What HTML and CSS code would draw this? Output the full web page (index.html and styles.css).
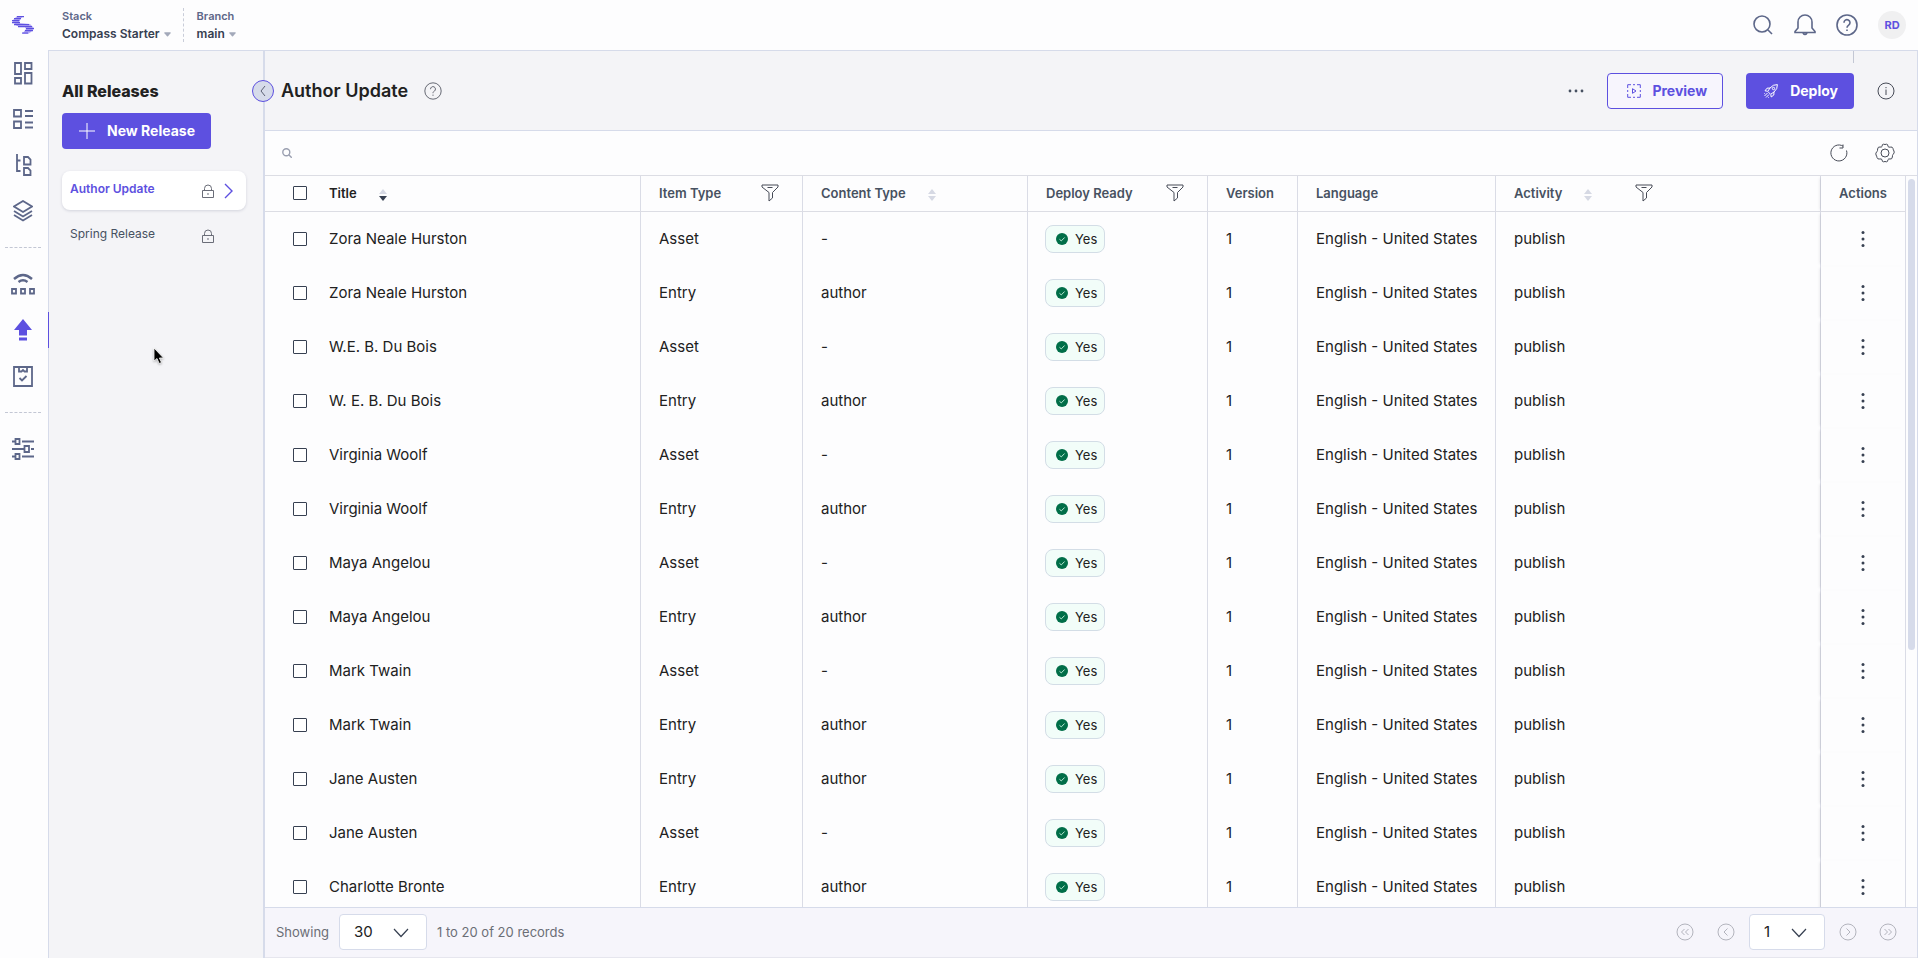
FILE: index.html
```html
<!DOCTYPE html>
<html lang="en">
<head>
<meta charset="utf-8">
<title>Releases</title>
<link rel="stylesheet" href="styles.css">
<script src="releases.js" defer></script>
</head>
<body>

<svg class="sprite" width="0" height="0">
	<symbol id="i-filter" viewBox="0 0 18 18"><path d="M1 1h16v2l-5.500 5.500v5.500l-3.500 3v-8.500L1 3zM6.500 3.500h5"/></symbol>
	<symbol id="i-sort" viewBox="0 0 8 12"><path class="up" d="M0 5l4-5 4 5z"/><path class="down" d="M0 7h8l-4 5z"/></symbol>
	<symbol id="i-lock" viewBox="0 0 12 14"><path d="M.5 6.500h11v7H.5zM2.500 6.500V4.500a3.500 3.500 0 0 1 7 0v2"/><circle cx="6" cy="10" r=".4"/></symbol>
	<symbol id="i-chevron" viewBox="0 0 16 10"><path d="M1 1l7 7.500L15 1"/></symbol>
	<symbol id="i-caret" viewBox="0 0 8 5"><path d="M1 0h6q1.200.300.500 1.200L4.600 4.600q-.6.500-1.200 0L.5 1.200Q-.200.300 1 0z"/></symbol>
	<symbol id="i-check" viewBox="0 0 12 12"><circle cx="6" cy="6" r="6" fill="#006e48"/><path d="M3.500 6.300l1.800 1.600 3.300-3.400" fill="none" stroke="#b9ead5"/></symbol>
	<symbol id="i-dots" viewBox="0 0 4 18"><circle cx="2" cy="2.500" r="1.500"/><circle cx="2" cy="9" r="1.500"/><circle cx="2" cy="15.500" r="1.500"/></symbol>
	<symbol id="i-help" viewBox="0 0 22 22"><circle cx="11" cy="11" r="10"/><path d="M8 8.800a3 3 0 1 1 4.700 2.300c-1.200.800-1.700 1.200-1.700 2.600M11 15.400v1.500"/></symbol>
</svg>

<div class="app">
	<nav class="rail">
		<a href="#" class="logo" aria-label="Home">
			<svg width="22" height="18" viewBox="0 0 22 18"><path fill="#b3a9f5" d="M5 0h6L7 5l1 2 10 1 4 4-3 4-3 2h-6l4-5-1-2-8-1-5-5z"/><path stroke="#5d50e0" stroke-width="1.200" d="M5 .6h7M2 2.600h7M0 4.600h7.500M0 6.600h8M2 8.600h15M6 10.600h14M14 12.600h8M13 14.600h8M10 17h6"/></svg>
		</a>
		<a href="#" class="rail-link" aria-label="Dashboard"><svg width="20" height="24" viewBox="0 0 20 24"><path d="M2 2h6v11H2zM12 2h6.500v6H12zM2 17h6v5.500H2zM12 12h6.500v10.500H12z"/></svg></a>
		<a href="#" class="rail-link" aria-label="Content models"><svg width="20" height="20" viewBox="0 0 20 20"><path d="M1 1h7v6.500H1zM1 12.500h7V19H1zM12 2h8M12 7h8M12 13.500h8M12 18.500h8"/></svg></a>
		<a href="#" class="rail-link" aria-label="Entries"><svg width="18" height="24" viewBox="0 0 18 24"><path d="M3 1v17h3.500M3 7.500h3.500M10 4h4l2.500 2.500V11.500H10zM10 15h4l2.500 2.500V22H10z"/></svg></a>
		<a href="#" class="rail-link" aria-label="Assets"><svg width="20" height="22" viewBox="0 0 20 22"><path d="M10 1l9 5.500-9 5.500-9-5.500zM1 11l9 5.500 9-5.500M1 15l9 5.500 9-5.500"/></svg></a>
		<hr class="rail-line">
		<a href="#" class="rail-link" aria-label="Publish queue"><svg width="24" height="22" viewBox="0 0 24 22"><path d="M3 6q9-8 18 0M7.500 9q4.500-3.500 9 0" stroke-width="2.400"/><path d="M1 16h4v4.500H1zM10 16h4v4.500h-4zM19 16h4v4.500h-4z"/></svg></a>
		<a href="#" class="rail-link active" aria-label="Releases"><svg width="18" height="22" viewBox="0 0 18 22"><path d="M9 0l9 11h-5v5.500H5V11H0zM5 18.500h8v3H5z"/></svg></a>
		<a href="#" class="rail-link" aria-label="Tasks"><svg width="20" height="22" viewBox="0 0 20 22"><path d="M1 2h18v19H1zM6 2v4.500h2.500l1.500-1.500 1.500 1.500H14V2M6.500 13l2.500 2.500 4.500-4.500"/></svg></a>
		<hr class="rail-line">
		<a href="#" class="rail-link" aria-label="Settings"><svg width="22" height="22" viewBox="0 0 22 22"><path d="M0 3.500h3M3.500 1h4v5h-4zM10 3.500h12M0 11h12M12.500 8h4.500v6h-4.500zM19 11h3M0 18.500h3M3.500 16h4v5h-4zM10 18.500h12"/></svg></a>
	</nav>

	<div class="page">
		<header class="topbar">
			<button type="button" class="switcher"><span class="switcher-label">Stack</span><span class="switcher-value">Compass Starter <svg width="7" height="5"><use href="#i-caret"/></svg></span></button>
			<span class="switcher-line"></span>
			<button type="button" class="switcher"><span class="switcher-label">Branch</span><span class="switcher-value">main <svg width="7" height="5"><use href="#i-caret"/></svg></span></button>
			<div class="topbar-tools">
				<button type="button" class="icon-btn" aria-label="Search"><svg width="22" height="22" viewBox="0 0 22 22"><circle cx="10" cy="10" r="8"/><path d="M16 16l4 4"/></svg></button>
				<button type="button" class="icon-btn" aria-label="Notifications"><svg width="22" height="22" viewBox="0 0 22 22"><path d="M4 14V8a7 7 0 0 1 14 0v6l3 3.500v1H1v-1zM9 19q2 3 4 0"/></svg></button>
				<button type="button" class="icon-btn" aria-label="Help"><svg width="22" height="22"><use href="#i-help"/></svg></button>
				<button type="button" class="avatar">RD</button>
			</div>
		</header>

		<div class="workspace">
			<aside class="releases">
				<h2 class="releases-title">All Releases</h2>
				<button type="button" class="btn btn-primary btn-new"><svg width="16" height="16" viewBox="0 0 16 16"><path d="M8 0v16M0 8h16"/></svg>New Release</button>
				<ul class="release-list">
					<li><a href="#" class="release current"><span>Author Update</span><svg class="lock" width="12" height="14"><use href="#i-lock"/></svg><svg class="go" width="9" height="16" viewBox="0 0 9 16"><path d="M1 1l7 7-7 7"/></svg></a></li>
					<li><a href="#" class="release"><span>Spring Release</span><svg class="lock" width="12" height="14"><use href="#i-lock"/></svg></a></li>
				</ul>
				<button type="button" class="collapse" aria-label="Collapse"><svg width="6" height="10" viewBox="0 0 6 10"><path d="M5 0L1 5l4 5"/></svg></button>
			</aside>

			<main class="main">
				<div class="main-head">
					<h1>Author Update</h1>
					<button type="button" class="thin-icon" aria-label="About releases"><svg width="18" height="18"><use href="#i-help"/></svg></button>
					<div class="main-actions">
						<button type="button" class="more" aria-label="More"><svg width="16" height="4" viewBox="0 0 16 4"><circle cx="2" cy="2" r="1.400"/><circle cx="8" cy="2" r="1.400"/><circle cx="14" cy="2" r="1.400"/></svg></button>
						<button type="button" class="btn btn-outline"><svg width="14" height="14" viewBox="0 0 14 14"><path d="M.7 4V.7H4M6 .7h2M10 .7h3.300V4M13.300 6v2M13.300 10v3.300H10M8 13.300H6M4 13.300H.7V10M.7 8V6M5.500 4.700L9 7 5.500 9.300z"/></svg>Preview</button>
						<button type="button" class="btn btn-primary"><svg width="14" height="14" viewBox="0 0 14 14"><path d="M13.400.600Q9 .300 6 4L3 4.200 1 6.800l2.500.400 3.300 3.300.400 2.500 2.600-2 .200-3Q13.700 5 13.400.600zM4 7l2-3M7 10l3-2M3.500 9l-3 3M5 10.500l-3 3M1 9l-.6.600M5 13l-.6.600"/><circle cx="9.500" cy="4.500" r="1.200"/></svg>Deploy</button>
						<button type="button" class="thin-icon" aria-label="Info"><svg width="18" height="18" viewBox="0 0 18 18"><circle cx="9" cy="9" r="8"/><path d="M9 7.500V13M9 5v1.200"/></svg></button>
					</div>
					<span class="tick"></span>
				</div>

				<div class="search-row">
					<label class="search"><svg width="10" height="10" viewBox="0 0 10 10"><circle cx="4.300" cy="4.300" r="3.500"/><path d="M6.800 6.800l3 3"/></svg><input type="text" aria-label="Search releases"></label>
					<button type="button" class="thin-icon" aria-label="Refresh"><svg width="18" height="18" viewBox="0 0 18 18"><path d="M16.500 6.500A8 8 0 1 1 13 2.100M13 .5v3.500h-3.500"/></svg></button>
					<button type="button" class="thin-icon" aria-label="Table settings"><svg width="20" height="20" viewBox="0 0 20 20"><circle cx="10" cy="10" r="4"/><path d="M7 3.500Q7 1 8.500 1.200q1.500.600 3 0Q13 1 13 3.500q.800 1 2.200.6Q17.500 3.500 18 5.500q.200 1.500 1 2.500.800 2-1 3.500-.8 1-.6 2.500Q17 16.500 15 16q-1.500-.4-2 .6-.2 2.400-1.500 2.200-1.500-.6-3 0Q7 19 7 16.600q-.8-1-2.200-.6Q2.500 16.500 2 14.500q-.2-1.500-1-2.500-.8-2 1-3.500.800-1 .6-2.500Q3 3.500 5 4q1.500.400 2-.5z"/></svg></button>
				</div>

				<div class="table-wrap">
					<table class="items">
						<colgroup>
							<col class="c-title"><col class="c-item"><col class="c-content"><col class="c-deploy"><col class="c-version"><col class="c-lang"><col><col class="c-actions">
						</colgroup>
						<thead>
							<tr>
								<th><div class="th-in"><input type="checkbox" aria-label="Select all"><span class="dark">Title</span><svg class="sort desc" width="8" height="12"><use href="#i-sort"/></svg></div></th>
								<th><div class="th-in spread">Item Type<svg class="filter" width="18" height="18"><use href="#i-filter"/></svg></div></th>
								<th><div class="th-in">Content Type<svg class="sort" width="8" height="12"><use href="#i-sort"/></svg></div></th>
								<th><div class="th-in spread">Deploy Ready<svg class="filter" width="18" height="18"><use href="#i-filter"/></svg></div></th>
								<th><div class="th-in">Version</div></th>
								<th><div class="th-in">Language</div></th>
								<th><div class="th-in">Activity<svg class="sort" width="8" height="12"><use href="#i-sort"/></svg><svg class="filter apart" width="18" height="18"><use href="#i-filter"/></svg></div></th>
								<th class="actions">Actions</th>
							</tr>
						</thead>
						<tbody id="rows"></tbody>
					</table>
					<div class="scroll"><div class="scroll-thumb"></div></div>
				</div>

				<footer class="pager">
					<label for="size">Showing</label>
					<span class="select"><select id="size"><option>30</option><option>50</option></select><svg width="16" height="10"><use href="#i-chevron"/></svg></span>
					<span>1 to 20 of 20 records</span>
					<div class="pager-nav">
						<button type="button" aria-label="First page"><svg width="18" height="18" viewBox="0 0 18 18"><circle cx="9" cy="9" r="8"/><path d="M8.500 6L5.500 9l3 3M12.500 6l-3 3 3 3"/></svg></button>
						<button type="button" aria-label="Previous page"><svg width="18" height="18" viewBox="0 0 18 18"><circle cx="9" cy="9" r="8"/><path d="M10.500 5.500L7 9l3.500 3.500"/></svg></button>
						<span class="select small"><select aria-label="Page"><option>1</option></select><svg width="16" height="10"><use href="#i-chevron"/></svg></span>
						<button type="button" aria-label="Next page"><svg width="18" height="18" viewBox="0 0 18 18"><circle cx="9" cy="9" r="8"/><path d="M7.500 5.500L11 9l-3.500 3.500"/></svg></button>
						<button type="button" aria-label="Last page"><svg width="18" height="18" viewBox="0 0 18 18"><circle cx="9" cy="9" r="8"/><path d="M5.500 6l3 3-3 3M9.500 6l3 3-3 3"/></svg></button>
					</div>
				</footer>
			</main>
		</div>
	</div>
</div>

<svg class="pointer" width="12" height="18" viewBox="0 0 12 18"><path d="M1 1v13l3-2.500 2.200 5 2.300-1L6.400 11H10.500z" fill="#000" stroke="#fff" stroke-width=".8"/></svg>

</body>
</html>
```

FILE: styles.css
```css
/* reset */
*{ box-sizing:border-box;}
html,body{ height:100%; margin:0; overflow:hidden;}
body{ font:14px/20px Inter, "Liberation Sans", sans-serif; color:#212121; background:#fdfdfe;}
h1,h2,ul{ margin:0; padding:0;}
li{ list-style:none;}
a{ color:inherit; text-decoration:none;}
button,input,select{ font:inherit; color:inherit; margin:0;}
button{ padding:0; border:0; background:none; cursor:pointer;}
svg{ display:block; flex:none; fill:none;}
.sprite{ position:absolute;}

/* frame */
.app{ display:flex; height:100%;}
.page{ flex:1; min-width:0; display:flex; flex-direction:column;}
.workspace{ flex:1; min-height:0; display:flex; border-top:1px solid #d6dbea;}

/* rail */
.rail{ width:48px; padding-right:2px; flex:none; display:flex; flex-direction:column;}
.logo{ height:50px; display:flex; align-items:center; justify-content:center;}
.rail-link{ position:relative; height:46px; display:flex; align-items:center; justify-content:center; stroke:#5d6789; stroke-width:1.8px;}
.rail-link.active svg{ fill:#5d50e0; stroke:none;}
.rail-link.active:after{ content:""; position:absolute; right:-3px; top:5px; width:1px; height:36px; background:#5d50e0; z-index:1;}
.rail-line{ width:36px; height:0; margin:13px auto; border:0; border-top:1px dashed #c3c7d4;}

/* topbar */
.topbar{ height:50px; flex:none; display:flex; align-items:center; padding:0 12px 0 14px;}
.switcher{ display:flex; flex-direction:column; align-items:flex-start; font-weight:600; text-align:left;}
.switcher-label{ font-size:11px; line-height:18px; color:#5d6789;}
.switcher-value{ font-size:12px; line-height:18px; color:#374051; display:flex; align-items:center; gap:4px;}
.switcher-value svg{ fill:#a3a9ba;}
.switcher-line{ height:34px; margin:0 13px 0 12px; border-left:1px dashed #c9cdd9;}
.topbar-tools{ margin-left:auto; display:flex; align-items:center; gap:20px;}
.icon-btn{ stroke:#5d6789; stroke-width:1.6px;}
.avatar{ width:28px; height:28px; border-radius:50%; background:#f0f0f1; color:#5d50e0; font-size:11px; font-weight:700;}

/* release pane */
.releases{ position:relative; width:217px; flex:none; padding:30px 17px 0 13px; background:#f4f4f7; border-left:1px solid #d6dbea; border-right:2px solid #d6dbea;}
.releases-title{ font-size:16px; line-height:20px; font-weight:800;}
.btn{ height:36px; display:flex; align-items:center; border-radius:4px; font-size:14px; font-weight:700;}
.btn-primary{ background:#5d50e0; color:#fff; stroke:#fff; padding:0 16px 0 18px; gap:12px;}
.btn-new{ margin-top:12px; padding:0 16px 0 17px; gap:12px;}
.release-list{ margin-top:22px;}
.release{ height:39px; display:flex; align-items:center; padding-left:8px; margin-bottom:6px; border-radius:8px; font-size:12px; color:#475161;}
.release span{ width:132px; padding-bottom:3px;}
.release.current{ background:#fff; color:#5d50e0; font-weight:600; box-shadow:0 1px 3px rgba(40,45,90,.16);}
.lock{ stroke:#6a6d78;}
.go{ margin-left:10px; stroke:#5d50e0; stroke-width:1.4px;}
.collapse{ position:absolute; right:-11px; top:29px; width:22px; height:22px; display:flex; align-items:center; justify-content:center; border:1px solid #5d50e0; border-radius:50%; background:#d6dbea; stroke:#5b6073; z-index:2;}

/* main head */
.main{ flex:1; min-width:0; display:flex; flex-direction:column; border-right:1px solid #d6dbea;}
.main-head{ position:relative; flex:none; height:80px; display:flex; align-items:center; padding:0 22px 0 16px; background:#f4f4f7; border-bottom:1px solid #d6dbea;}
.main-head h1{ font-size:18px; line-height:24px; font-weight:600; margin-right:16px;}
.thin-icon{ stroke:#474b57; stroke-width:1px;}
.main-actions{ margin-left:auto; display:flex; align-items:center; gap:23px;}
.more svg{ fill:#475161;}
.btn-outline{ border:1px solid #5d50e0; color:#5d50e0; background:#f7f5fd; stroke:#5d50e0; padding:0 15px 0 19px; gap:11px;}
.tick{ position:absolute; top:0; right:63px; width:1px; height:12px; background:#c3c7d4;}

/* search */
.search-row{ flex:none; height:45px; display:flex; align-items:center; gap:27px; padding:0 22px 0 17px; border-bottom:1px solid #dcdde4;}
.search{ flex:1; display:flex; align-items:center; gap:8px; stroke:#9a9fb0; stroke-width:1.4px;}
.search input{ flex:1; border:0; outline:0; background:none;}

/* table */
.table-wrap{ flex:1; min-height:0; display:flex; overflow:hidden;}
.items{ flex:1; width:0; align-self:flex-start; table-layout:fixed; border-collapse:separate; border-spacing:0;}
.c-title{ width:376px;}
.c-item{ width:162px;}
.c-content{ width:225px;}
.c-deploy{ width:180px;}
.c-version{ width:90px;}
.c-lang{ width:198px;}
.c-actions{ width:85px;}
.items th,.items td{ padding:0 0 0 18px; border-right:1px solid #dadce6; text-align:left; white-space:nowrap;}
.items th{ height:36px; padding-bottom:2px; border-bottom:1px solid #dcdde4; font-size:13px; font-weight:600; color:#475161;}
.items td{ height:54px; font-size:15px;}
.items th:first-child,.items td:first-child{ padding-left:28px;}
.items th.actions,.items td.actions{ padding-left:0; text-align:center; box-shadow:-3px 0 3px -2px rgba(60,60,80,.14);}
.th-in{ display:flex; align-items:center;}
.dark{ color:#212121;}
.spread{ justify-content:space-between; padding-right:23px;}
.up{ fill:#d6d9e4;}
.down{ fill:var(--down, #d6d9e4);}
.sort{ margin-left:22px; margin-top:4px;}
.desc{ --down:#374051;}
.filter{ stroke:#474b57;}
.apart{ margin-left:43px;}
.cell-title{ display:flex; align-items:center;}
.items input{ appearance:none; width:14px; height:14px; margin:0 22px 0 0; border:1px solid #374051; border-radius:1px; background:#fff; flex:none;}
.badge{ width:60px; height:28px; margin-left:-1px; display:flex; align-items:center; gap:7px; padding-left:10px; border:1px solid #d3dde6; border-radius:8px; background:#f2fdf9; font-size:13px;}
.row-menu{ display:inline-flex; padding:4px; vertical-align:middle;}
.row-menu svg{ fill:#374051;}
.scroll{ width:11px; flex:none; padding:3px 2px;}
.scroll-thumb{ width:7px; height:65%; border-radius:4px; background:#d6dbea;}

/* pager */
.pager{ flex:none; height:51px; display:flex; align-items:center; gap:10px; padding:0 20px 1px 11px; background:#f6f5fb; border-top:1px solid #d6dbea; border-bottom:1px solid #e6e6ee; font-size:13px; color:#6b6e76;}
.select{ position:relative; width:88px;}
.select.small{ width:76px; margin:0 14px;}
.select select{ appearance:none; display:block; width:100%; height:36px; padding:0 14px; border:1px solid #d6dbea; border-radius:4px; background:#fff; font-size:15px; color:#212121;}
.select svg{ position:absolute; right:18px; top:14px; stroke:#374051; stroke-width:1.2px; pointer-events:none;}
.pager-nav{ margin-left:auto; display:flex; align-items:center;}
.pager-nav button{ stroke:#b3b4bd;}
.pager-nav button:first-child{ margin-right:23px;}
.pager-nav button:last-child{ margin-left:22px;}

.pointer{ position:absolute; left:153px; top:347px; filter:drop-shadow(0 1px 1px rgba(0,0,0,.3)); pointer-events:none;}
```

FILE: releases.js
```js
var items = [
	['Zora Neale Hurston', 'Asset'],
	['Zora Neale Hurston', 'Entry'],
	['W.E. B. Du Bois', 'Asset'],
	['W. E. B. Du Bois', 'Entry'],
	['Virginia Woolf', 'Asset'],
	['Virginia Woolf', 'Entry'],
	['Maya Angelou', 'Asset'],
	['Maya Angelou', 'Entry'],
	['Mark Twain', 'Asset'],
	['Mark Twain', 'Entry'],
	['Jane Austen', 'Entry'],
	['Jane Austen', 'Asset'],
	['Charlotte Bronte', 'Entry']
];

var html = '';
for(var i=0;i<items.length;i++){
	var title = items[i][0];
	var type = items[i][1];
	html += '<tr>' +
		'<td><label class="cell-title"><input type="checkbox">' + title + '</label></td>' +
		'<td>' + type + '</td>' +
		'<td>' + (type == 'Entry' ? 'author' : '-') + '</td>' +
		'<td><span class="badge"><svg width="12" height="12"><use href="#i-check"/></svg>Yes</span></td>' +
		'<td>1</td>' +
		'<td>English - United States</td>' +
		'<td>publish</td>' +
		'<td class="actions"><button type="button" class="row-menu" aria-label="Row actions"><svg width="4" height="18"><use href="#i-dots"/></svg></button></td>' +
	'</tr>';
}
document.getElementById('rows').innerHTML = html;
```
